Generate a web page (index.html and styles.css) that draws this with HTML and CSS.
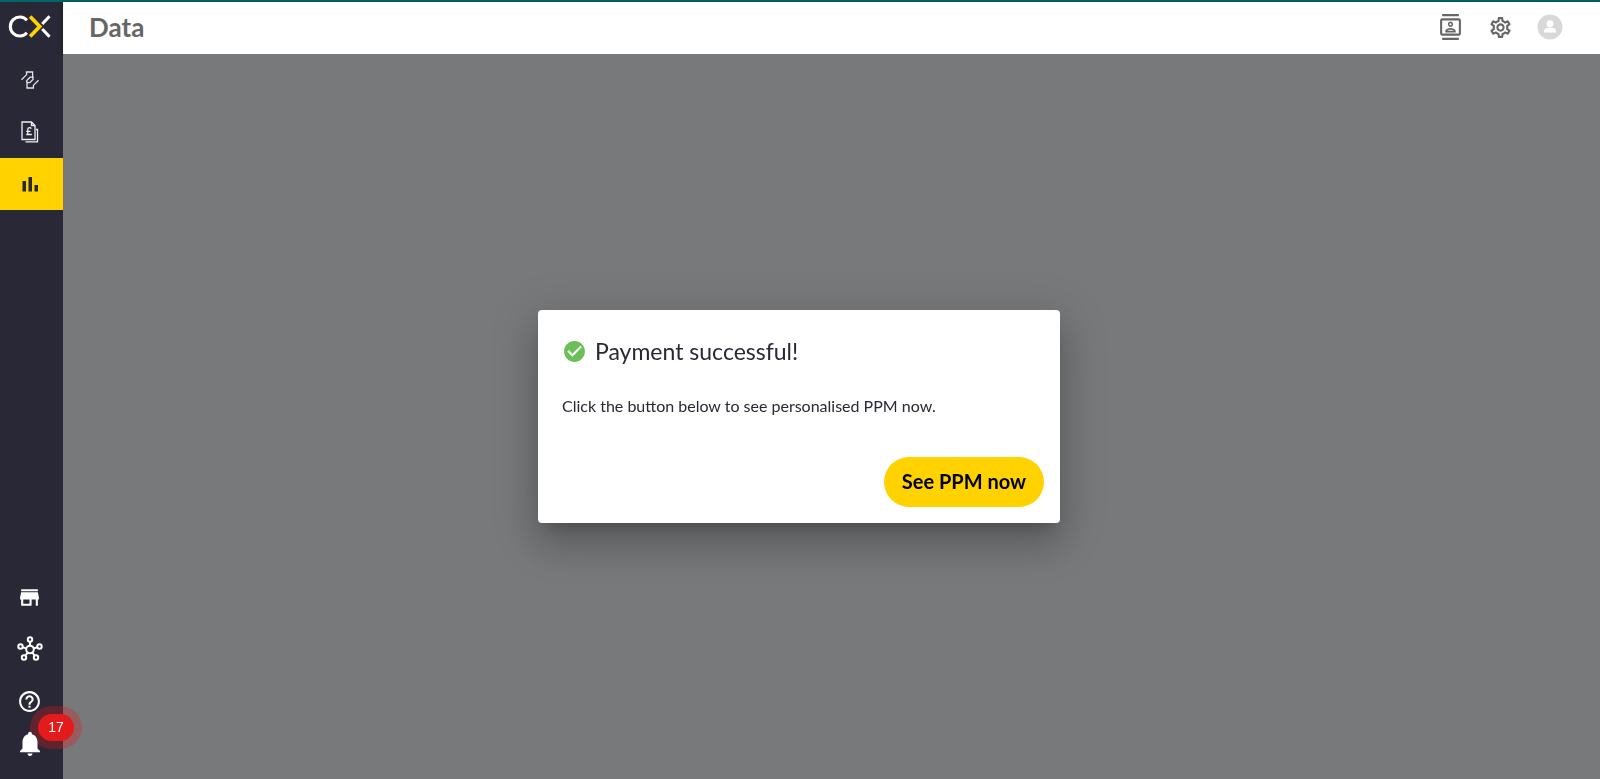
FILE: index.html
```html
<!DOCTYPE html>
<html lang="en">
<head>
<meta charset="utf-8">
<title>Data</title>
<link rel="stylesheet" href="styles.css">
</head>
<body>
<div class="app">
  <aside class="sidebar">
    <a class="logo" href="#" aria-label="CX home">
      <svg width="43" height="23" viewBox="0 0 42 22" fill="none" stroke-width="3">
        <path d="M18.5 4.8A9.3 9.3 0 1 0 18.5 17.2" stroke="#fff"/>
        <path d="M21.6 1.2L31 11L21.6 20.8" stroke="#ffd200" stroke-width="3.6"/>
        <path d="M40.6 1L33.4 8.6M33.4 13.4L40.6 21" stroke="#fff"/>
      </svg>
    </a>
    <nav class="nav">
      <a class="nav-item" href="#" aria-label="Transactions">
        <svg width="18" height="18" viewBox="0 0 18 18" fill="none" stroke="#e4e4e8" stroke-width="1.3">
          <path d="M.5 8.7L5.6 3.6V1H11.600V7M4.800 1H11.600M17.500 9.300L12.400 14.400V17H6V11M13 17H6"/>
          <path d="M5.800 11.200V9.500L9 6.200H12V8.500L8.800 11.700H5.800"/>
        </svg>
      </a>
      <a class="nav-item" href="#" aria-label="Invoices">
        <svg width="18" height="22" viewBox="0 0 18 22" fill="none" stroke="#f0f0f2" stroke-width="1.300">
          <path d="M1 1H10.500L14 4.500V18.500H1ZM10.500 1V4.500H14M15 8.500H16.500V20.800H4.500"/>
          <path d="M10.200 7.700C9.600 6.200 6.800 6.300 6.800 8.600V13.500H5.200M6 13.500H10.800M5.200 10.300H9.500"/>
        </svg>
      </a>
      <a class="nav-item active" href="#" aria-label="Data">
        <svg width="16" height="16" viewBox="0 0 16 16" fill="#292836">
          <path d="M0.500 5H4V15.500H0.500ZM6.500 1H10V15.500H6.500ZM12.500 9H16V15.500H12.500Z"/>
        </svg>
      </a>
    </nav>
    <nav class="nav nav-bottom">
      <a class="nav-item" href="#" aria-label="Store">
        <svg width="23" height="23" viewBox="1 1 22 22" fill="#fff"><path d="M20 4H4v2h16V4zm1 10v-2l-1-5H4l-1 5v2h1v6h10v-6h4v6h2v-6h1zm-9 4H6v-4h6v4z"/></svg>
      </a>
      <a class="nav-item" href="#" aria-label="Hub">
        <svg width="26" height="26" viewBox="0 0 26 26" fill="none" stroke="#fff" stroke-width="2">
          <circle cx="13" cy="13.500" r="3.800"/>
          <circle cx="13" cy="3.500" r="2.200"/><circle cx="3.500" cy="10.500" r="2.200"/><circle cx="22.500" cy="10.500" r="2.200"/><circle cx="7" cy="21.500" r="2.200"/><circle cx="19" cy="21.500" r="2.200"/>
          <path d="M13 5.700V9.700M5.600 11.200L9.300 12.400M20.400 11.200L16.700 12.400M8.300 19.700L10.700 16.600M17.700 19.700L15.300 16.600"/>
        </svg>
      </a>
      <a class="nav-item" href="#" aria-label="Help">
        <svg width="25" height="25" viewBox="0 0 24 24" fill="#fff"><path d="M11 18h2v-2h-2v2zm1-16C6.480 2 2 6.480 2 12s4.480 10 10 10 10-4.480 10-10S17.520 2 12 2zm0 18c-4.410 0-8-3.590-8-8s3.590-8 8-8 8 3.590 8 8-3.590 8-8 8zm0-14c-2.210 0-4 1.790-4 4h2c0-1.100.9-2 2-2s2 .9 2 2c0 2-3 1.750-3 5h2c0-2.250 3-2.500 3-5 0-2.210-1.790-4-4-4z"/></svg>
      </a>
      <button class="bell" type="button" aria-label="Notifications, 17 unread">
        <svg class="bell-icon" width="20" height="25" viewBox="4 2 16 20" preserveAspectRatio="none" fill="#fff"><path d="M12 22c1.100 0 2-.9 2-2h-4c0 1.100.89 2 2 2zm6-6v-5c0-3.070-1.640-5.640-4.500-6.320V4c0-.83-.67-1.500-1.500-1.500s-1.500.67-1.500 1.500v.68C7.630 5.360 6 7.920 6 11v5l-2 2v1h16v-1l-2-2z"/></svg>
        <span class="badge">17</span>
      </button>
    </nav>
  </aside>
  <div class="page">
    <header class="topbar">
      <h1 class="page-title">Data</h1>
      <div class="actions">
        <button class="icon-button" type="button" aria-label="Contacts">
          <svg width="25" height="26" viewBox="0 0 24 24" preserveAspectRatio="none" fill="#666"><path d="M20 4H4c-1.100 0-2 .9-2 2v12c0 1.100.9 2 2 2h16c1.100 0 2-.9 2-2V6c0-1.100-.9-2-2-2zm0 14H4V6h16v12zM4 0h16v2H4zm0 22h16v2H4zm8-10c1.380 0 2.500-1.120 2.500-2.500S13.380 7 12 7 9.500 8.120 9.500 9.500 10.620 12 12 12zm0-3.500c.55 0 1 .45 1 1s-.45 1-1 1-1-.45-1-1 .45-1 1-1zm5 7.490C17 13.900 13.690 13 12 13s-5 .9-5 2.990V17h10v-1.010zm-8.190-.49c.61-.52 2.030-1 3.190-1 1.170 0 2.590.48 3.200 1H8.810z"/></svg>
        </button>
        <button class="icon-button" type="button" aria-label="Settings">
          <svg width="25" height="25" viewBox="0 0 24 24" fill="#666"><path d="M19.430 12.980c.04-.32.070-.64.070-.98 0-.34-.03-.66-.07-.98l2.110-1.650c.19-.15.240-.42.120-.64l-2-3.460c-.09-.16-.26-.25-.44-.25-.06 0-.12.010-.17.030l-2.490 1c-.52-.4-1.080-.73-1.690-.98l-.38-2.650C14.460 2.180 14.250 2 14 2h-4c-.25 0-.46.180-.49.420l-.38 2.650c-.61.250-1.170.59-1.690.98l-2.490-1c-.06-.02-.12-.03-.18-.03-.17 0-.34.090-.43.250l-2 3.460c-.13.220-.07.490.12.640l2.110 1.650c-.04.320-.07.650-.07.980 0 .33.030.66.070.98l-2.110 1.650c-.19.150-.24.420-.12.640l2 3.460c.09.160.26.250.44.250.06 0 .12-.01.170-.03l2.490-1c.52.4 1.080.73 1.690.98l.38 2.650c.03.240.24.420.49.420h4c.25 0 .46-.18.490-.42l.38-2.650c.61-.25 1.170-.59 1.690-.98l2.490 1c.06.020.12.030.18.030.17 0 .34-.09.430-.25l2-3.460c.12-.22.070-.49-.12-.64l-2.110-1.650zm-1.980-1.710c.04.310.05.520.05.730 0 .21-.02.430-.05.730l-.14 1.130.89.7 1.080.84-.7 1.210-1.270-.51-1.040-.42-.9.680c-.43.320-.84.560-1.250.730l-1.060.43-.16 1.130-.2 1.350h-1.400l-.19-1.350-.16-1.130-1.060-.43c-.43-.18-.83-.41-1.230-.71l-.91-.7-1.060.43-1.270.51-.7-1.210 1.080-.84.890-.7-.14-1.130c-.03-.31-.05-.54-.05-.74s.020-.43.050-.73l.14-1.130-.89-.7-1.080-.84.7-1.210 1.270.51 1.040.42.9-.68c.43-.32.840-.56 1.250-.73l1.060-.43.160-1.130.2-1.350h1.390l.19 1.350.16 1.130 1.060.43c.43.180.83.410 1.230.71l.91.7 1.060-.43 1.270-.51.7 1.210-1.070.85-.89.7.14 1.130zM12 8c-2.210 0-4 1.790-4 4s1.790 4 4 4 4-1.790 4-4-1.790-4-4-4zm0 6c-1.100 0-2-.9-2-2s.9-2 2-2 2 .9 2 2-.9 2-2 2z"/></svg>
        </button>
        <button class="icon-button" type="button" aria-label="Account">
          <svg width="26" height="26" viewBox="0 0 26 26"><circle cx="13" cy="13" r="12.500" fill="#d8d8d8"/><circle cx="13" cy="9.700" r="3.400" fill="#fff"/><path d="M7 18.600V17C7 14.600 10.400 13.500 13 13.500S19 14.600 19 17V18.600Z" fill="#fff"/></svg>
        </button>
      </div>
    </header>
    <main class="content"></main>
  </div>
</div>
<div class="overlay">
  <section class="dialog" role="dialog" aria-modal="true" aria-labelledby="dialog-title">
    <h2 class="dialog-title" id="dialog-title">
      <svg width="25" height="25" viewBox="0 0 24 24" fill="#6abf59"><path d="M12 2C6.480 2 2 6.480 2 12s4.480 10 10 10 10-4.480 10-10S17.520 2 12 2zm-2 15l-5-5 1.410-1.410L10 14.170l7.590-7.590L19 8l-9 9z"/></svg>
      <span>Payment successful!</span>
    </h2>
    <p class="dialog-text">Click the button below to see personalised PPM now.</p>
    <div class="dialog-actions">
      <button class="primary" type="button">See PPM now</button>
    </div>
  </section>
</div>
</body>
</html>
```
FILE: styles.css
```css
* { box-sizing: border-box; }
body {
  margin: 0;
  font-family: Lato, "Liberation Sans", sans-serif;
  color: #292836;
}
svg { display: block; }
button { font: inherit; border: 0; cursor: pointer; }
.app {
  display: flex;
  min-height: 100vh;
  border-top: 2px solid #00666c;
}
.sidebar {
  display: flex;
  flex-direction: column;
  flex: none;
  width: 63px;
  background: #292836;
}
.logo {
  display: flex;
  align-items: center;
  height: 52px;
  padding: 0 0 4px 8px;
}
.nav { display: flex; flex-direction: column; }
.nav-bottom { margin-top: auto; }
.nav-item {
  display: flex;
  align-items: center;
  justify-content: center;
  height: 52px;
  padding-right: 4px;
}
.active { background: #ffd200; }
.bell {
  position: relative;
  display: flex;
  justify-content: center;
  height: 52px;
  padding: 4px 4px 0 0;
  background: none;
}
.bell-icon { position: relative; z-index: 2; }
.badge {
  position: absolute;
  left: 38px;
  top: -13px;
  z-index: 1;
  width: 36px;
  height: 27px;
  border-radius: 14px;
  background: #e31b1b;
  box-shadow: 0 0 0 8px rgba(227, 27, 27, 0.3);
  color: #fff;
  font-family: "Liberation Sans", sans-serif;
  font-size: 14px;
  line-height: 27px;
  text-align: center;
}
.page {
  display: flex;
  flex-direction: column;
  flex: 1;
}
.topbar {
  display: flex;
  align-items: center;
  justify-content: space-between;
  height: 52px;
  padding: 0 37px 2px 26px;
  background: #fff;
  box-shadow: 0 1px 4px rgba(0, 0, 0, 0.5);
}
.page-title {
  margin: 0;
  color: #666;
  font-size: 26px;
  font-weight: 700;
  line-height: 32px;
}
.actions { display: flex; gap: 24px; }
.icon-button {
  display: flex;
  align-items: center;
  justify-content: center;
  width: 26px;
  height: 26px;
  padding: 0;
  background: none;
}
.content { flex: 1; background: #78797b; }
.overlay {
  position: fixed;
  inset: 54px 0 0;
  display: flex;
  align-items: center;
  justify-content: center;
  padding-right: 2px;
  pointer-events: none;
}
.dialog {
  width: 522px;
  max-width: 90%;
  padding: 24px 16px 16px 24px;
  border-radius: 4px;
  background: #fff;
  box-shadow: 0 11px 15px -7px rgba(0, 0, 0, 0.2), 0 24px 38px 3px rgba(0, 0, 0, 0.14), 0 9px 46px 8px rgba(0, 0, 0, 0.12);
  pointer-events: auto;
}
.dialog-title {
  display: flex;
  align-items: center;
  gap: 8px;
  margin: 0;
  font-size: 23px;
  font-weight: 400;
  line-height: 34px;
}
.dialog-text {
  margin: 26px 0 39px;
  font-size: 16px;
  line-height: 24px;
}
.dialog-actions { display: flex; justify-content: flex-end; }
.primary {
  min-width: 160px;
  height: 50px;
  padding: 0 16px 2px;
  border-radius: 25px;
  background: #ffd200;
  color: #000;
  font-size: 20px;
  font-weight: 700;
}
```
